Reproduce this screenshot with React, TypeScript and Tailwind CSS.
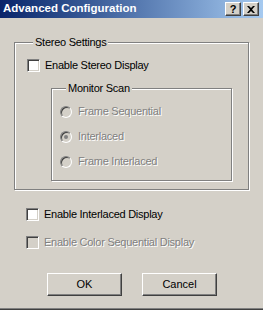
const FONT = "font-['Liberation_Sans',Arial,sans-serif]";

const CaptionButton = ({ children }: { children: React.ReactNode }) => (
  <div className="flex w-[16px] h-[14px] items-center justify-center bg-[#D4D0C8] border border-t-white border-l-white border-b-[#404040] border-r-[#404040] shadow-[inset_-1px_-1px_0_#808080]">
    {children}
  </div>
);

const TitleBar = () => (
  <div className="flex flex-row h-[18px] pl-[3px] pr-[4px] items-center justify-between bg-linear-to-r from-[#0A246A] to-[#A6CAF0]">
    <span className="text-white text-[11.5px] font-bold leading-none">Advanced Configuration</span>
    <div className="flex flex-row gap-[2px]">
      <CaptionButton>
        <span className="text-black text-[11px] font-bold leading-none">?</span>
      </CaptionButton>
      <CaptionButton>
        <svg width="8" height="7" viewBox="0 0 8 7">
          <path d="M0 0h2l2 2 2-2h2L5 3.5 8 7H6L4 5 2 7H0l3-3.5z" fill="#000" />
        </svg>
      </CaptionButton>
    </div>
  </div>
);

const Checkbox = ({ label, disabled = false }: { label: string; disabled?: boolean }) => (
  <div className="flex flex-row h-[13px] gap-[5px] items-center">
    <div
      className={`w-[13px] h-[13px] shrink-0 border border-t-[#808080] border-l-[#808080] border-b-white border-r-white shadow-[inset_1px_1px_0_#404040,inset_-1px_-1px_0_#D4D0C8] ${
        disabled ? "bg-[#D4D0C8]" : "bg-white"
      }`}
    />
    <Label text={label} disabled={disabled} />
  </div>
);

const Label = ({ text, disabled }: { text: string; disabled?: boolean }) => (
  <span
    className={`leading-[13px] whitespace-nowrap tracking-[-0.25px] ${
      disabled ? "text-[#808080] [text-shadow:1px_1px_0_#fff]" : "text-black"
    }`}
  >
    {text}
  </span>
);

const Radio = ({ label, checked = false }: { label: string; checked?: boolean }) => (
  <div className="flex flex-row h-[13px] gap-[6px] items-center">
    <div className="flex w-[12px] h-[12px] shrink-0 items-center justify-center rounded-full bg-[#D4D0C8] border border-t-[#808080] border-l-[#808080] border-b-white border-r-white shadow-[inset_1px_1px_0_#404040]">
      {checked && <div className="w-[4px] h-[4px] rounded-full bg-[#808080]" />}
    </div>
    <Label text={label} disabled />
  </div>
);

const GroupBox = ({ title, className, children }: { title: string; className: string; children: React.ReactNode }) => (
  <fieldset className={`border border-[#808080] shadow-[inset_1px_1px_0_#fff,1px_1px_0_#fff] ${className}`}>
    <legend className="ml-[6px] px-[2px] leading-[13px] tracking-[-0.25px] bg-[#D4D0C8] text-black">{title}</legend>
    {children}
  </fieldset>
);

const PushButton = ({ label }: { label: string }) => (
  <button
    type="button"
    className="flex w-[75px] h-[23px] items-center justify-center bg-[#D4D0C8] border border-t-white border-l-white border-b-[#404040] border-r-[#404040] shadow-[inset_-1px_-1px_0_#808080] text-black text-[11px]"
  >
    {label}
  </button>
);

export default function App() {
  return (
    <div
      className={`flex flex-col w-[263px] h-[310px] bg-[#D4D0C8] text-[11px] ${FONT} shadow-[inset_0_-1px_0_#404040,inset_0_-2px_0_#808080]`}
    >
      <TitleBar />
      <div className="flex flex-col px-[14px]">
        <GroupBox title="Stereo Settings" className="mt-[18px] pl-[12px] pr-[16px] pb-[8px]">
          <div className="mt-[10px]">
            <Checkbox label="Enable Stereo Display" />
          </div>
          <GroupBox title="Monitor Scan" className="mt-[10px] ml-[24px] pl-[8px] pb-[12px]">
            <div className="flex flex-col mt-[10px] gap-[12px]">
              <Radio label="Frame Sequential" />
              <Radio label="Interlaced" checked />
              <Radio label="Frame Interlaced" />
            </div>
          </GroupBox>
        </GroupBox>
        <div className="flex flex-col ml-[12px] mt-[18px] gap-[15px]">
          <Checkbox label="Enable Interlaced Display" />
          <Checkbox label="Enable Color Sequential Display" disabled />
        </div>
        <div className="flex flex-row ml-[33px] mt-[24px] gap-[20px]">
          <PushButton label="OK" />
          <PushButton label="Cancel" />
        </div>
      </div>
    </div>
  );
}
